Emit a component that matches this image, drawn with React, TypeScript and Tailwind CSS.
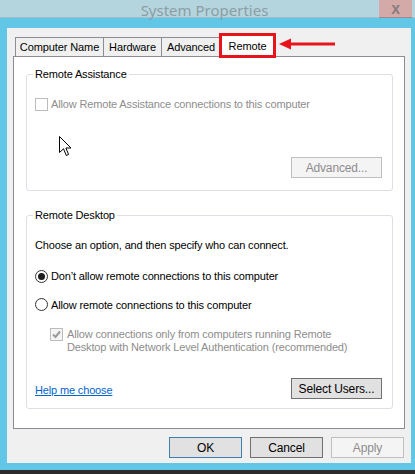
import React from "react";

const font = { fontFamily: "'Liberation Sans', Arial, sans-serif" };

function Tab({ label, w, selected }: { label: string; w: string; selected?: boolean }) {
  if (selected) {
    return (
      <div
        className={`${w} h-[23px] bg-white border border-[#8a8d94] border-b-0 relative z-10 -mb-px -ml-px flex items-start justify-center pt-[5px] text-[11px] leading-[13px] tracking-[-0.1px] text-black whitespace-nowrap`}>
        {label}
      </div>
    );
  }
  return (
    <div
      className={`${w} h-[19px] bg-[#f0f0f0] border border-[#8a8d94] border-b-0 -ml-px first:ml-0 flex items-center justify-center text-[11px] tracking-[-0.1px] text-black whitespace-nowrap`}>
      {label}
    </div>
  );
}

function Radio({ checked }: { checked?: boolean }) {
  return (
    <span className="w-[13px] h-[13px] rounded-full border border-[#333] bg-white flex items-center justify-center shrink-0">
      {checked && <span className="w-[7px] h-[7px] rounded-full bg-[#1e1e1e]" />}
    </span>
  );
}

function WinButton({ children, disabled, def, w = "w-[91px]" }: { children: React.ReactNode; disabled?: boolean; def?: boolean; w?: string }) {
  const cls = disabled
    ? "border-[#bfbfbf] bg-[#f4f4f4] text-[#8d8d8d]"
    : def
    ? "border-[#3c7fb1] bg-[#e1e1e1] text-black"
    : "border-[#707070] bg-[#e1e1e1] text-black";
  return (
    <div className={`${w} h-[21px] border ${cls} flex items-center justify-center text-[12px]`}>{children}</div>
  );
}

function Group({ title, h, children }: { title: string; h: string; children: React.ReactNode }) {
  return (
    <div className={`relative w-[367px] ${h} border border-[#dcdfe3] rounded-[3px]`}>
      <span className="absolute -top-[8px] left-[6px] bg-white px-[2px] text-[11px] leading-[15px] text-black">{title}</span>
      {children}
    </div>
  );
}

export default function App() {
  return (
    <div className="w-[415px] h-[474px] bg-[#62c7e7] flex flex-col overflow-hidden relative tracking-[-0.15px]" style={font}>
      {/* title bar */}
      <div className="h-[18px] bg-[#b4d5de] border-b border-[#9fc0ca] flex relative shrink-0">
        <div className="flex-1 flex justify-center pl-[30px]">
          <span className="text-[15px] leading-[18px] text-[#8c9da3] pt-[1px] tracking-normal" style={{ fontFamily: "'Noto Sans', 'Liberation Sans', sans-serif" }}>
            System Properties
          </span>
        </div>
        <div className="w-[33px] h-[18px] mr-[3px] bg-[#d4aaa9] border-b border-[#9a8a8a] flex items-center justify-center text-[#8a7c7c] text-[16px] font-bold">
          x
        </div>
      </div>

      {/* client area */}
      <div className="mt-[10px] ml-[7px] w-[404px] h-[435px] bg-[#f0f0f0] flex flex-col shrink-0">
        {/* tabs */}
        <div className="flex items-end ml-[8px] mt-[6px] relative z-10">
          <Tab label="Computer Name" w="w-[89px]" />
          <Tab label="Hardware" w="w-[59px]" />
          <Tab label="Advanced" w="w-[60px]" />
          <Tab label="Remote" w="w-[55px]" selected />
        </div>

        {/* panel */}
        <div className="ml-[6px] w-[392px] h-[373px] bg-white border border-[#8a8d94] flex flex-col pl-[12px] pt-[17px]">
          <Group title="Remote Assistance" h="h-[117px]">
            <div className="flex items-center gap-[3px] ml-[8px] mt-[21px] text-[11px] text-[#8d8d8d]">
              <span className="w-[13px] h-[13px] border border-[#bcbcbc] bg-white shrink-0" />
              <span>Allow Remote Assistance connections to this computer</span>
            </div>
            <div className="absolute right-[10px] bottom-[12px]">
              <WinButton disabled>Advanced...</WinButton>
            </div>
          </Group>

          <div className="h-[24px]" />

          <Group title="Remote Desktop" h="h-[194px]">
            <div className="ml-[8px] mt-[22px] text-[11px] text-black leading-[15px]">
              Choose an option, and then specify who can connect.
            </div>
            <div className="flex items-center gap-[3px] ml-[8px] mt-[15px] text-[11px] text-black">
              <Radio checked />
              <span>Don’t allow remote connections to this computer</span>
            </div>
            <div className="flex items-center gap-[3px] ml-[8px] mt-[12px] text-[11px] text-black">
              <Radio />
              <span>Allow remote connections to this computer</span>
            </div>
            <div className="flex items-start gap-[4px] ml-[23px] mt-[15px] text-[11px] leading-[13px] text-[#8d8d8d]">
              <span className="w-[13px] h-[13px] border border-[#bcbcbc] bg-[#f4f4f4] shrink-0 flex items-center justify-center">
                <svg width="11" height="11" viewBox="0 0 11 11">
                  <path d="M2 5.5 L4.5 8 L9 2.5" fill="none" stroke="#9a9a9a" strokeWidth="2" />
                </svg>
              </span>
              <div className="flex flex-col">
                <span>Allow connections only from computers running Remote</span>
                <span>Desktop with Network Level Authentication (recommended)</span>
              </div>
            </div>
            <div className="absolute left-[8px] bottom-[10px] text-[11px] text-[#0066cc] underline">Help me choose</div>
            <div className="absolute right-[10px] bottom-[9px]">
              <WinButton>Select Users...</WinButton>
            </div>
          </Group>
        </div>

        {/* dialog buttons */}
        <div className="flex justify-end gap-[8px] mr-[7px] mt-[8px]">
          <WinButton def w="w-[73px]">OK</WinButton>
          <WinButton w="w-[73px]">Cancel</WinButton>
          <WinButton disabled w="w-[73px]">Apply</WinButton>
        </div>
      </div>

      <div className="flex-1" />
      <div className="h-[4px] bg-[#2b2b2b] shrink-0" />

      {/* annotation: red box + arrow */}
      <div className="absolute left-[219px] top-[33px] w-[57px] h-[25px] border-[3px] border-[#e8141c] z-20" />
      <svg className="absolute left-[279px] top-[38px] z-20" width="58" height="12" viewBox="0 0 58 12">
        <path d="M0 6 L12 0.5 L12 11.5 Z" fill="#e8141c" />
        <rect x="10" y="4.5" width="46" height="3" fill="#e8141c" />
      </svg>

      {/* mouse cursor */}
      <svg className="absolute left-[59px] top-[136px] z-20" width="13" height="22" viewBox="0 0 13 22">
        <path d="M0.5 0.5 L0.5 16.5 L4.5 12.8 L7.3 19.5 L9.6 18.5 L6.9 12 L12 12 Z" fill="#fff" stroke="#000" strokeWidth="1" />
      </svg>
    </div>
  );
}
